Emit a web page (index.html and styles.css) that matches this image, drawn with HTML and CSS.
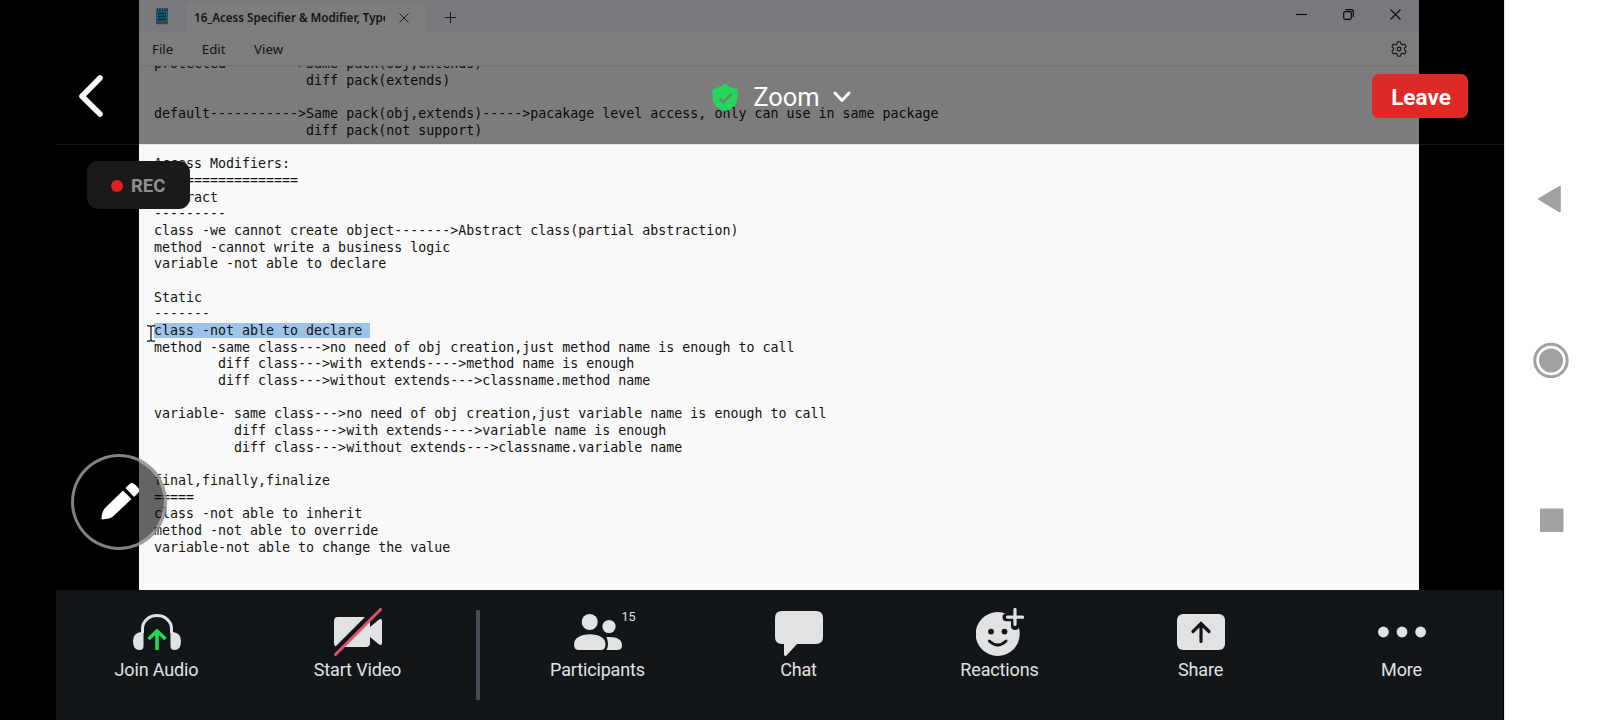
FILE: index.html
```html
<!DOCTYPE html>
<html lang="en">
<head>
<meta charset="utf-8">
<title>Zoom</title>
<link rel="stylesheet" href="styles.css">
</head>
<body>
<div class="screen">
  <main class="stage">
    <section class="notepad">
      <div class="titlebar">
        <svg class="app-icon" width="14" height="17" viewBox="0 0 14 17"><rect x="1" y="1.5" width="12" height="13" rx="1" fill="#39b2d8"/><path d="M1 14h12v1.2q0 1-1 1H2q-1 0-1-1z" fill="#b5754f"/><path d="M2.5 0v3M5 0v3M7.500 0v3M10 0v3M12 0v3" stroke="#165f7c" stroke-width="1.200"/><path d="M3 5.500h8M3 8.500h8M3 11.500h8" stroke="#12617e" stroke-width="1.400"/></svg>
        <div class="tab">
          <span class="tab-name">16_Acess Specifier &amp; Modifier, Types</span>
          <svg width="10" height="10" viewBox="0 0 10 10" fill="none" stroke="#444" stroke-width="1"><path d="M.5.5l9 9M9.500.5l-9 9"/></svg>
        </div>
        <svg class="new-tab" width="11" height="11" viewBox="0 0 11 11" fill="none" stroke="#333" stroke-width="1"><path d="M5.500 0v11M0 5.500h11"/></svg>
        <div class="window-controls">
          <svg width="11" height="11" viewBox="0 0 11 11" fill="none" stroke="#111" stroke-width="1.100"><path d="M0 5.500h11"/></svg>
          <svg width="11" height="11" viewBox="0 0 11 11" fill="none" stroke="#111" stroke-width="1.200"><rect x=".7" y="2.700" width="7.600" height="7.600" rx="1.200"/><path d="M2.500.7h5.300q2.500 0 2.500 2.500v5"/></svg>
          <svg width="11" height="11" viewBox="0 0 11 11" fill="none" stroke="#111" stroke-width="1.100"><path d="M.5.5l10 10M10.500.5l-10 10"/></svg>
        </div>
      </div>
      <div class="menubar">
        <span>File</span><span>Edit</span><span>View</span>
        <svg class="gear" width="16" height="16" viewBox="0 0 16 16" fill="none" stroke="#222" stroke-width="1.100" stroke-linejoin="round"><path d="M6.500.8h3l.5 2.100 1.500.8 2.100-.7 1.600 2.700-1.600 1.500v1.600l1.600 1.500-1.600 2.700-2.100-.7-1.500.8-.5 2.100h-3L6 13.100l-1.500-.8-2.100.7-1.600-2.700 1.600-1.500V7.200L.8 5.700 2.400 3l2.100.7L6 2.900z"/><circle cx="8" cy="8" r="1.900"/></svg>
      </div>
      <div class="editor">
<pre class="text">protected---------&gt;Same pack(obj,extends)
                   diff pack(extends)

default-----------&gt;Same pack(obj,extends)-----&gt;pacakage level access, only can use in same package
                   diff pack(not support)

Access Modifiers:
==================
Abstract
---------
class -we cannot create object-------&gt;Abstract class(partial abstraction)
method -cannot write a business logic
variable -not able to declare

Static
-------
<span class="selected">class -not able to declare </span>
method -same class---&gt;no need of obj creation,just method name is enough to call
        diff class---&gt;with extends----&gt;method name is enough
        diff class---&gt;without extends---&gt;classname.method name

variable- same class---&gt;no need of obj creation,just variable name is enough to call
          diff class---&gt;with extends----&gt;variable name is enough
          diff class---&gt;without extends---&gt;classname.variable name

final,finally,finalize
=====
class -not able to inherit
method -not able to override
variable-not able to change the value</pre>
        <svg class="caret" width="8" height="17" viewBox="0 0 8 17" fill="none" stroke="#111" stroke-width="1.200"><path d="M0 .8h2.800L4 2 5.200.8H8M4 2v13M0 16.200h2.800L4 15l1.200 1.200H8"/></svg>
      </div>
    </section>

    <header class="meeting-bar">
      <svg class="back" width="26" height="44" viewBox="0 0 26 44" fill="none" stroke="#f8f9fd" stroke-width="5.600" stroke-linecap="round" stroke-linejoin="round"><path d="M22 4L4 22.300 22 40"/></svg>
      <div class="meeting-title">
        <svg width="26" height="29" viewBox="0 0 26 29"><path d="M13 .5q5.500 4.500 12.500 5.500v8.500q0 9.500-12.500 14Q.5 24 .5 14.500V6Q7.500 5 13 .5z" fill="#23d959"/><path d="M7.500 15.300l3.800 4L19.500 11" fill="none" stroke="#6c8872" stroke-width="2.800"/></svg>
        <span>Zoom</span>
        <svg class="chevron" width="18" height="12" viewBox="0 0 18 12" fill="none" stroke="#fff" stroke-width="3" stroke-linecap="round" stroke-linejoin="round"><path d="M2 2l7 7.500L16 2"/></svg>
      </div>
      <button class="leave">Leave</button>
    </header>
    <div class="rec"><i></i>REC</div>
    <div class="annotate">
      <svg width="38" height="38" viewBox="0 0 38 38" fill="#fff"><path d="M22 8.500l8.500 8.500L12.500 34Q10 37 .5 37.500.5 30 4 26z"/><path d="M24.500 6l3.500-3.500q3-3 6.500.5l2 2q3 3 .5 6L33 15z"/></svg>
    </div>
  </main>

  <footer class="toolbar">
    <div class="tool">
      <svg width="48" height="48" viewBox="0 0 48 48"><path d="M9.500 25V20.500a14.500 13 0 0 1 29 0V25" fill="none" stroke="#e0e2e4" stroke-width="3"/><path d="M8 24h2.500v14q0 4-4 4Q0 42 0 33q0-8 8-9zM40 24h-2.500v14q0 4 4 4Q48 42 48 33q0-8-8-9z" fill="#e0e2e4"/><path d="M24 42V23M15.500 31l8.500-8 8.500 8" fill="none" stroke="#23d959" stroke-width="3.600"/></svg>
      <span>Join Audio</span>
    </div>
    <div class="tool">
      <svg width="48" height="48" viewBox="0 0 48 48"><path d="M4 9h28q4 0 4 4v6l8.500-7q3.500-2.500 3.500 1v22q0 3.500-3.500 1L36 29v6q0 4-4 4H4q-4 0-4-4V13q0-4 4-4z" fill="#e0e2e4"/><path d="M-1 44.500L44-.5" stroke="#121619" stroke-width="5"/><path d="M1.500 46.500l45-45" stroke="#dc526a" stroke-width="3" stroke-linecap="round"/></svg>
      <span>Start Video</span>
    </div>
    <div class="divider"></div>
    <div class="tool">
      <div class="badged">
        <svg width="48" height="48" viewBox="0 0 48 48" fill="#e0e2e4"><circle cx="15.700" cy="14" r="8"/><circle cx="35" cy="18.500" r="6.600"/><path d="M5 42q-5 0-5-5.500C0 30 7 26.300 16 26.300S31.500 30 31.500 36.500q0 5.500-5 5.500zM32.500 42q3-6 0-13Q48 28 48 37.500q0 4.500-5 4.500z"/></svg>
        <b class="count">15</b>
      </div>
      <span>Participants</span>
    </div>
    <div class="tool">
      <svg width="48" height="48" viewBox="0 0 48 48" fill="#e0e2e4"><path d="M7 3h34q7 0 7 7v19q0 7-7 7H22L11.500 47.500Q9 49 9 46V36H7q-7 0-7-7V10q0-7 7-7z"/></svg>
      <span>Chat</span>
    </div>
    <div class="tool">
      <svg width="48" height="48" viewBox="0 0 48 48"><circle cx="21.700" cy="26" r="22" fill="#e0e2e4"/><path d="M39 2v16M30.500 9.200H47" stroke="#121619" stroke-width="8" stroke-linecap="round"/><path d="M39 1.500v15M31.500 9.200h15" stroke="#e0e2e4" stroke-width="3.200" stroke-linecap="round"/><g fill="#121619"><circle cx="15" cy="23.600" r="2.900"/><circle cx="28.500" cy="23.600" r="2.900"/></g><path d="M13.300 33q8.400 8 16.800 0" fill="none" stroke="#121619" stroke-width="2.800" stroke-linecap="round"/></svg>
      <span>Reactions</span>
    </div>
    <div class="tool">
      <svg width="48" height="48" viewBox="0 0 48 48"><rect y="6" width="48" height="36" rx="6" fill="#e0e2e4"/><path d="M24 33.500v-18M16 23.500l8-8 8 8" fill="none" stroke="#121619" stroke-width="3.200" stroke-linecap="round"/></svg>
      <span>Share</span>
    </div>
    <div class="tool">
      <svg width="48" height="48" viewBox="0 0 48 48" fill="#e0e2e4"><circle cx="5.400" cy="24" r="5.400"/><circle cx="24" cy="24" r="5.400"/><circle cx="42.600" cy="24" r="5.400"/></svg>
      <span>More</span>
    </div>
  </footer>
</div>
<nav class="system-nav">
  <svg width="36" height="36" viewBox="0 0 36 36" fill="#a1a1a1" stroke="#a1a1a1" stroke-width="2" stroke-linejoin="round"><path d="M6 18L26.800 5.800v24.500z"/></svg>
  <svg width="36" height="36" viewBox="0 0 36 36"><circle cx="18" cy="18.500" r="16.200" fill="none" stroke="#a1a1a1" stroke-width="3"/><circle cx="18" cy="18.500" r="12" fill="#a1a1a1"/></svg>
  <svg width="36" height="36" viewBox="0 0 36 36"><rect x="7" y="5.500" width="23.500" height="23.500" rx="1" fill="#a1a1a1"/></svg>
</nav>
</body>
</html>
```
FILE: styles.css
```css
* { box-sizing: border-box; }
body {
  margin: 0;
  width: 1600px;
  height: 720px;
  display: flex;
  overflow: hidden;
  background: #000;
  font-family: Roboto, sans-serif;
}
svg { display: block; flex: none; }

.screen {
  width: 1504px;
  display: flex;
  flex-direction: column;
}
.stage {
  position: relative;
  height: 590px;
  padding: 0 85px 0 139px;
}

/* shared notepad window */
.notepad {
  height: 590px;
  display: flex;
  flex-direction: column;
  background: #f9f9f9;
  font-family: "Noto Sans", sans-serif;
  color: #2a2a2a;
}
.titlebar {
  height: 32px;
  display: flex;
  background: #f1f2f9;
}
.app-icon { margin: 8px 0 0 16px; }
.tab {
  width: 240px;
  height: 31px;
  margin: 2px 0 0 17px;
  padding: 0 17px 0 8px;
  display: flex;
  align-items: center;
  justify-content: space-between;
  background: #fafafc;
  border-radius: 8px 8px 0 0;
  font-size: 11.600px;
  font-weight: 600;
}
.tab-name {
  width: 191px;
  overflow: hidden;
  white-space: nowrap;
}
.new-tab { margin: 12px 0 0 19px; }
.window-controls {
  margin-left: auto;
  padding: 9px 18px 0 0;
  display: flex;
  gap: 36px;
}
.menubar {
  height: 34px;
  padding: 0 12px 0 13px;
  display: flex;
  align-items: center;
  gap: 28.500px;
  background: #fafafb;
  border-bottom: 1px solid #e4e5ee;
  font-size: 13.300px;
}
.gear { margin-left: auto; }
.editor {
  position: relative;
  flex: 1;
  overflow: hidden;
  padding-left: 15px;
}
.text {
  margin: -9.800px 0 0;
  font: 13.300px/16.667px "DejaVu Sans Mono", monospace;
  color: #111;
}
.selected {
  background: linear-gradient(#9dc4e8, #9dc4e8) 0 0 / 100% 100% no-repeat;
}
.caret {
  position: absolute;
  left: 8px;
  top: 259px;
}

/* controls floating over the shared window */
.meeting-bar {
  position: absolute;
  left: 55px;
  right: 0;
  top: 0;
  height: 145px;
  padding: 0 36px 0 23px;
  display: flex;
  justify-content: space-between;
  background: rgba(0, 0, 0, .5);
  background-clip: padding-box;
  border-bottom: 1px solid rgba(128, 128, 128, .18);
}
.back { margin-top: 74px; }
.meeting-title {
  display: flex;
  align-items: center;
  height: 34px;
  margin: 80px 0 0 87px;
  color: #fff;
  font-size: 25.500px;
}
.meeting-title span { margin-left: 15px; }
.chevron { margin: 0 0 0 13px; }
.leave {
  width: 96px;
  height: 44px;
  margin-top: 74px;
  padding: 2px 0 0 2px;
  border: 0;
  border-radius: 7px;
  background: #df2828;
  color: #fff;
  font: 700 22.500px Roboto, sans-serif;
}
.rec {
  position: absolute;
  left: 87px;
  top: 161px;
  width: 103px;
  height: 48px;
  padding: 1px 0 0 24px;
  display: flex;
  align-items: center;
  gap: 8px;
  border-radius: 11px;
  background: #1a1a1a;
  color: #8f8f8f;
  font-size: 18.500px;
  font-weight: 700;
}
.rec i {
  width: 12px;
  height: 12px;
  border-radius: 50%;
  background: #e02020;
}
.annotate {
  position: absolute;
  left: 71px;
  top: 454px;
  width: 96px;
  height: 96px;
  padding: 0 0 2px 1px;
  display: flex;
  align-items: center;
  justify-content: center;
  border-radius: 50%;
  border: 3px solid rgba(145, 145, 145, .9);
  background: rgba(0, 0, 0, .6);
  background-clip: padding-box;
}

/* meeting toolbar */
.toolbar {
  width: 1447px;
  height: 130px;
  margin-left: 56px;
  display: flex;
  background: #121619;
  color: #e0e2e4;
}
.tool {
  flex: 0 0 201px;
  padding-top: 18px;
  display: flex;
  flex-direction: column;
  align-items: center;
  font-size: 18px;
  letter-spacing: -.15px;
  line-height: 28px;
}
.divider {
  flex: none;
  width: 4px;
  height: 90px;
  margin: 20px 17px 0 18px;
  border-radius: 1px;
  background: #464a54;
}
.badged { position: relative; }
.count {
  position: absolute;
  left: 48px;
  top: 2px;
  font-size: 12.500px;
  font-weight: 400;
  letter-spacing: 0;
  line-height: 14px;
}

/* system navigation */
.system-nav {
  width: 96px;
  padding: 181px 0 0 28px;
  display: flex;
  flex-direction: column;
  gap: 125px;
  background: #fff;
  border-left: 1px solid #e6e6e6;
}
```
